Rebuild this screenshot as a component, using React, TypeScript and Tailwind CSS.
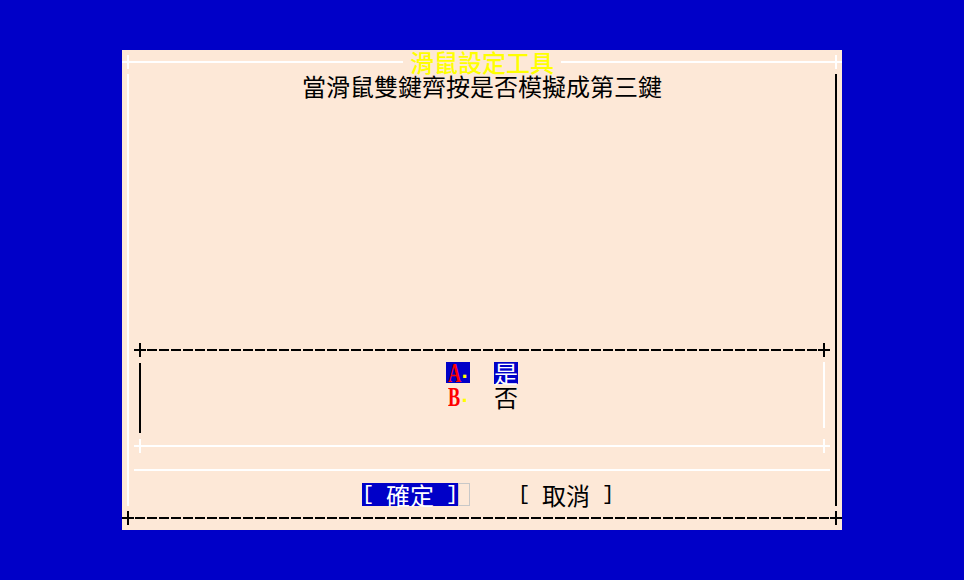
import React from 'react'

const BLUE = '#0000c8'

// box-drawing "+" glyph, one 12x24 terminal cell
const Cross = ({ color }: { color: string }) => (
  <svg width="12" height="24" viewBox="0 0 12 24" className="shrink-0">
    <rect x="0" y="11" width="12" height="2" fill={color} />
    <rect x="5" y="5" width="2" height="14" fill={color} />
  </svg>
)

const WhiteLine = () => <div className="h-[2px] flex-1 bg-white" />

const DashedLine = () => (
  <div className="h-[2px] flex-1 bg-[repeating-linear-gradient(90deg,transparent_0_1px,#000_1px_11px,transparent_11px_12px)]" />
)

const Bracket = ({ children }: { children: React.ReactNode }) => (
  <span className="inline-flex h-[23px] w-[12px] items-center justify-center font-['Liberation_Mono',monospace] text-[21px] leading-[23px]">
    {children}
  </span>
)

const Letter = ({ children }: { children: React.ReactNode }) => (
  <span className="inline-block w-[12px] scale-x-[0.65] text-center font-['Liberation_Serif',serif] text-[28px] font-bold leading-[21px] text-[#ff0000]">
    {children}
  </span>
)

const Dot = () => (
  <span className="inline-block w-[12px] text-center font-['Liberation_Mono',monospace] text-[22px] font-bold leading-[21px] text-[#ffff00]">
    .
  </span>
)

const Button = ({ label, active }: { label: string; active?: boolean }) => (
  <div
    className={
      active
        ? 'flex h-[23px] items-center self-end bg-[#0000c8] text-white'
        : 'flex h-[23px] items-center self-end text-black'
    }
  >
    <Bracket>[</Bracket>
    <span className="w-[12px]" />
    <span className="leading-[23px]">{label}</span>
    <span className="w-[12px]" />
    <Bracket>]</Bracket>
  </div>
)

export default function App() {
  return (
    <div className="flex h-screen w-full items-center justify-center bg-[#0000c8]" style={{ background: BLUE }}>
      <div className="flex h-[480px] w-[720px] flex-col bg-[#fde8d7] font-['Noto_Sans_CJK_TC',sans-serif] text-[24px] leading-6">
        {/* title row */}
        <div className="flex h-6 items-center">
          <Cross color="#fff" />
          <WhiteLine />
          <span className="px-[7px] font-medium leading-6 text-[#ffff00]">滑鼠設定工具</span>
          <WhiteLine />
          <Cross color="#fff" />
        </div>

        <div className="mx-[5px] flex flex-1 flex-col border-l-2 border-r-2 border-l-white border-r-black px-[5px]">
          <p className="h-6 text-center text-black">當滑鼠雙鍵齊按是否模擬成第三鍵</p>
          <div className="flex-1" />

          {/* menu box */}
          <div className="flex h-6 items-center">
            <Cross color="#000" />
            <DashedLine />
            <Cross color="#000" />
          </div>
          <div className="flex h-[72px]">
            <div className="flex w-[12px] justify-center py-px">
              <div className="w-[2px] bg-black" />
            </div>
            <div className="flex flex-1 flex-col items-center">
              <div className="flex h-6 items-start">
                <span className="flex h-[21px] items-center bg-[#0000c8]">
                  <Letter>A</Letter>
                  <Dot />
                </span>
                <span className="w-[24px]" />
                <span className="h-[22px] bg-[#0000c8] leading-[21px] text-white">是</span>
              </div>
              <div className="flex h-6 items-start">
                <span className="flex h-[21px] items-center">
                  <Letter>B</Letter>
                  <Dot />
                </span>
                <span className="w-[24px]" />
                <span className="h-[22px] leading-[21px] text-black">否</span>
              </div>
            </div>
            <div className="flex w-[12px] justify-center pb-[6px]">
              <div className="w-[2px] bg-white" />
            </div>
          </div>
          <div className="flex h-6 items-center">
            <Cross color="#fff" />
            <WhiteLine />
            <Cross color="#fff" />
          </div>

          {/* separator */}
          <div className="flex h-6 items-center">
            <WhiteLine />
          </div>

          {/* buttons */}
          <div className="flex h-6 pl-[228px]">
            <Button label="確定" active />
            <div className="h-[23px] w-[12px] self-end border border-[#c8c8c8]" />
            <div className="w-[48px]" />
            <Button label="取消" />
          </div>
        </div>

        {/* bottom row */}
        <div className="flex h-6 items-center">
          <Cross color="#000" />
          <DashedLine />
          <Cross color="#000" />
        </div>
      </div>
    </div>
  )
}
